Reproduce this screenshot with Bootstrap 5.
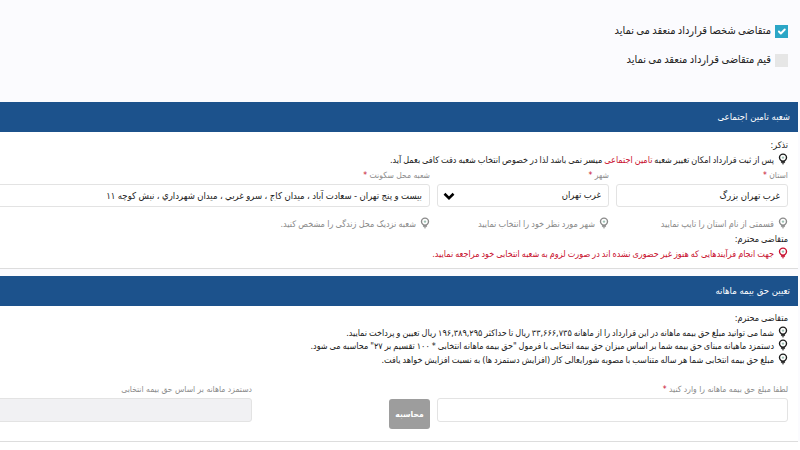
<!DOCTYPE html>
<html lang="fa" dir="rtl">
<head>
<meta charset="utf-8">
<title>قرارداد</title>
<link rel="stylesheet" href="https://cdn.jsdelivr.net/npm/bootstrap@5.3.0/dist/css/bootstrap.min.css">
<style>
html,body{height:450px;overflow:hidden;}
body{background:#fff;font-family:"DejaVu Sans Condensed","DejaVu Sans",sans-serif;font-size:9px;color:#222;}
.sheet{width:1200px;padding:8px 2px 0 0;background:#fbfbfe;min-height:442px;}
.choices{height:94px;padding:16px 10px 0 0;}
.choice{height:14px;margin-bottom:15px;}
.choice .tick{width:13px;height:13px;border:0;border-radius:0;margin:0;float:none;background-color:#e6e6e6;flex:none;}
.choice .tick:checked{background-color:#2ba6c6;}
.choice label{font-size:11px;color:#222;word-spacing:-.8px;}
.pane{border:0;border-radius:0;border-bottom:1px solid #ddd;background:#fff;margin-bottom:7px;}
.pane-head{background:#1c528c;color:#fff;height:30px;font-size:9.5px;padding:0 8px;display:flex;align-items:center;}
.pane-one{height:136px;padding:7px 10px 0 0;}
.pane-two{height:135px;padding:6px 10px 0 0;}
.note{font-size:9px;line-height:13.5px;height:13.5px;color:#1a1a1a;word-spacing:-.6px;}
.note-last{margin-bottom:3px;}
.bulb{width:10px;height:12px;margin-left:4px;vertical-align:-2px;}
.warn{color:#c8102e;}
.wide-row{width:1074px;--bs-gutter-x:7px;--bs-gutter-y:0;}
.fld-label{font-size:8.5px;color:#8c8c8c;margin:0 0 3px;line-height:12px;display:block;}
.fld-label b{color:#c8102e;font-weight:400;}
.fld{height:23px;font-size:9.5px;color:#222;padding:0 7px;border:1px solid #e3e3e3;border-radius:3px;box-shadow:none;background-color:#fff;word-spacing:-.3px;}
.fld-sel{background-position:left 5px center;background-size:12px 12px;background-image:url("data:image/svg+xml,%3csvg xmlns='http://www.w3.org/2000/svg' viewBox='0 0 16 16'%3e%3cpath fill='none' stroke='%23000' stroke-width='3.4' d='M2 5l6 6 6-6'/%3e%3c/svg%3e");padding:0 7px 0 30px;}
.hint{font-size:9px;color:#8a8a8a;line-height:12px;word-spacing:-.4px;}
.hints{margin-top:10px;margin-bottom:4px;height:12px;}
.go-col{width:48px;padding-top:16px;}
.go{width:41px;height:30px;background:#9d9d9d;border:0;border-radius:3px;color:#fff;font-size:8.5px;font-weight:700;padding:0;display:block;}
.calc-row{margin-top:17px;}
.calc-input{height:24px;}
.calc-off:disabled{background:#f1f1f3;}
.gap-col{margin-right:130px;}
</style>
</head>
<body>
<svg width="0" height="0" class="position-absolute">
  <symbol id="bulb" viewBox="0 0 10 12">
    <circle cx="5" cy="4.6" r="3.5" fill="none" stroke="currentColor" stroke-width="1.4"/>
    <path d="M3.4 8.4h3.2v1.2H3.4zM4 10.8h2" fill="currentColor" stroke="currentColor" stroke-width=".8"/>
    <circle cx="5" cy="4.6" r="1.2" fill="#9fc2b4"/>
  </symbol>
</svg>
<div class="sheet">
  <div class="choices">
    <div class="choice d-flex align-items-center gap-1">
      <input class="form-check-input tick" type="checkbox" id="c1" checked>
      <label for="c1">متقاضی شخصا قرارداد منعقد می نماید</label>
    </div>
    <div class="choice d-flex align-items-center gap-1">
      <input class="form-check-input tick" type="checkbox" id="c2">
      <label for="c2">قیم متقاضی قرارداد منعقد می نماید</label>
    </div>
  </div>

  <div class="pane">
    <div class="pane-head">شعبه تامین اجتماعی</div>
    <div class="pane-one">
      <div class="note">تذکر:</div>
      <div class="note note-last"><svg class="bulb"><use href="#bulb"/></svg>پس از ثبت قرارداد امکان تغییر شعبه <span class="warn">تامین اجتماعی</span> میسر نمی باشد لذا در خصوص انتخاب شعبه دقت کافی بعمل آید.</div>
      <div class="row wide-row">
        <div class="col-2"><label class="fld-label">استان <b>*</b></label><input class="form-control fld" value="غرب تهران بزرگ"></div>
        <div class="col-2"><label class="fld-label">شهر <b>*</b></label><select class="form-select fld fld-sel"><option>غرب تهران</option></select></div>
        <div class="col-6"><label class="fld-label">شعبه محل سکونت <b>*</b></label><input class="form-control fld" value="بیست و پنج تهران - سعادت آباد ، میدان کاج ، سرو غربي ، میدان شهرداري ، نبش کوچه ۱۱"></div>
      </div>
      <div class="row wide-row hints">
        <div class="col-2 hint"><svg class="bulb"><use href="#bulb"/></svg>قسمتی از نام استان را تایپ نمایید</div>
        <div class="col-2 hint"><svg class="bulb"><use href="#bulb"/></svg>شهر مورد نظر خود را انتخاب نمایید</div>
        <div class="col-6 hint"><svg class="bulb"><use href="#bulb"/></svg>شعبه نزدیک محل زندگی را مشخص کنید.</div>
      </div>
      <div class="note">متقاضی محترم:</div>
      <div class="note warn"><svg class="bulb"><use href="#bulb"/></svg>جهت انجام فرآیندهایی که هنوز غیر حضوری نشده اند در صورت لزوم به شعبه انتخابی خود مراجعه نمایید.</div>
    </div>
  </div>

  <div class="pane">
    <div class="pane-head">تعیین حق بیمه ماهانه</div>
    <div class="pane-two">
      <div class="note">متقاضی محترم:</div>
      <div class="note"><svg class="bulb"><use href="#bulb"/></svg>شما می توانید مبلغ حق بیمه ماهانه در این قرارداد را از ماهانه ۳۳,۶۶۶,۷۳۵ ریال تا حداکثر ۱۹۶,۳۸۹,۲۹۵ ریال تعیین و پرداخت نمایید.</div>
      <div class="note"><svg class="bulb"><use href="#bulb"/></svg>دستمزد ماهیانه مبنای حق بیمه شما بر اساس میزان حق بیمه انتخابی با فرمول "حق بیمه ماهانه انتخابی * ۱۰۰ تقسیم بر ۲۷" محاسبه می شود.</div>
      <div class="note"><svg class="bulb"><use href="#bulb"/></svg>مبلغ حق بیمه انتخابی شما هر ساله متناسب با مصوبه شورایعالی کار (افزایش دستمزد ها) به نسبت افزایش خواهد یافت.</div>
      <div class="row wide-row calc-row">
        <div class="col-4"><label class="fld-label">لطفا مبلغ حق بیمه ماهانه را وارد کنید <b>*</b></label><input class="form-control fld calc-input"></div>
        <div class="col-auto go-col"><button class="btn go" type="button">محاسبه</button></div>
        <div class="col-5 gap-col"><label class="fld-label">دستمزد ماهانه بر اساس حق بیمه انتخابی</label><input class="form-control fld calc-input calc-off" disabled></div>
      </div>
    </div>
  </div>
</div>
<script src="https://cdn.jsdelivr.net/npm/bootstrap@5.3.0/dist/js/bootstrap.bundle.min.js"></script>
</body>
</html>
